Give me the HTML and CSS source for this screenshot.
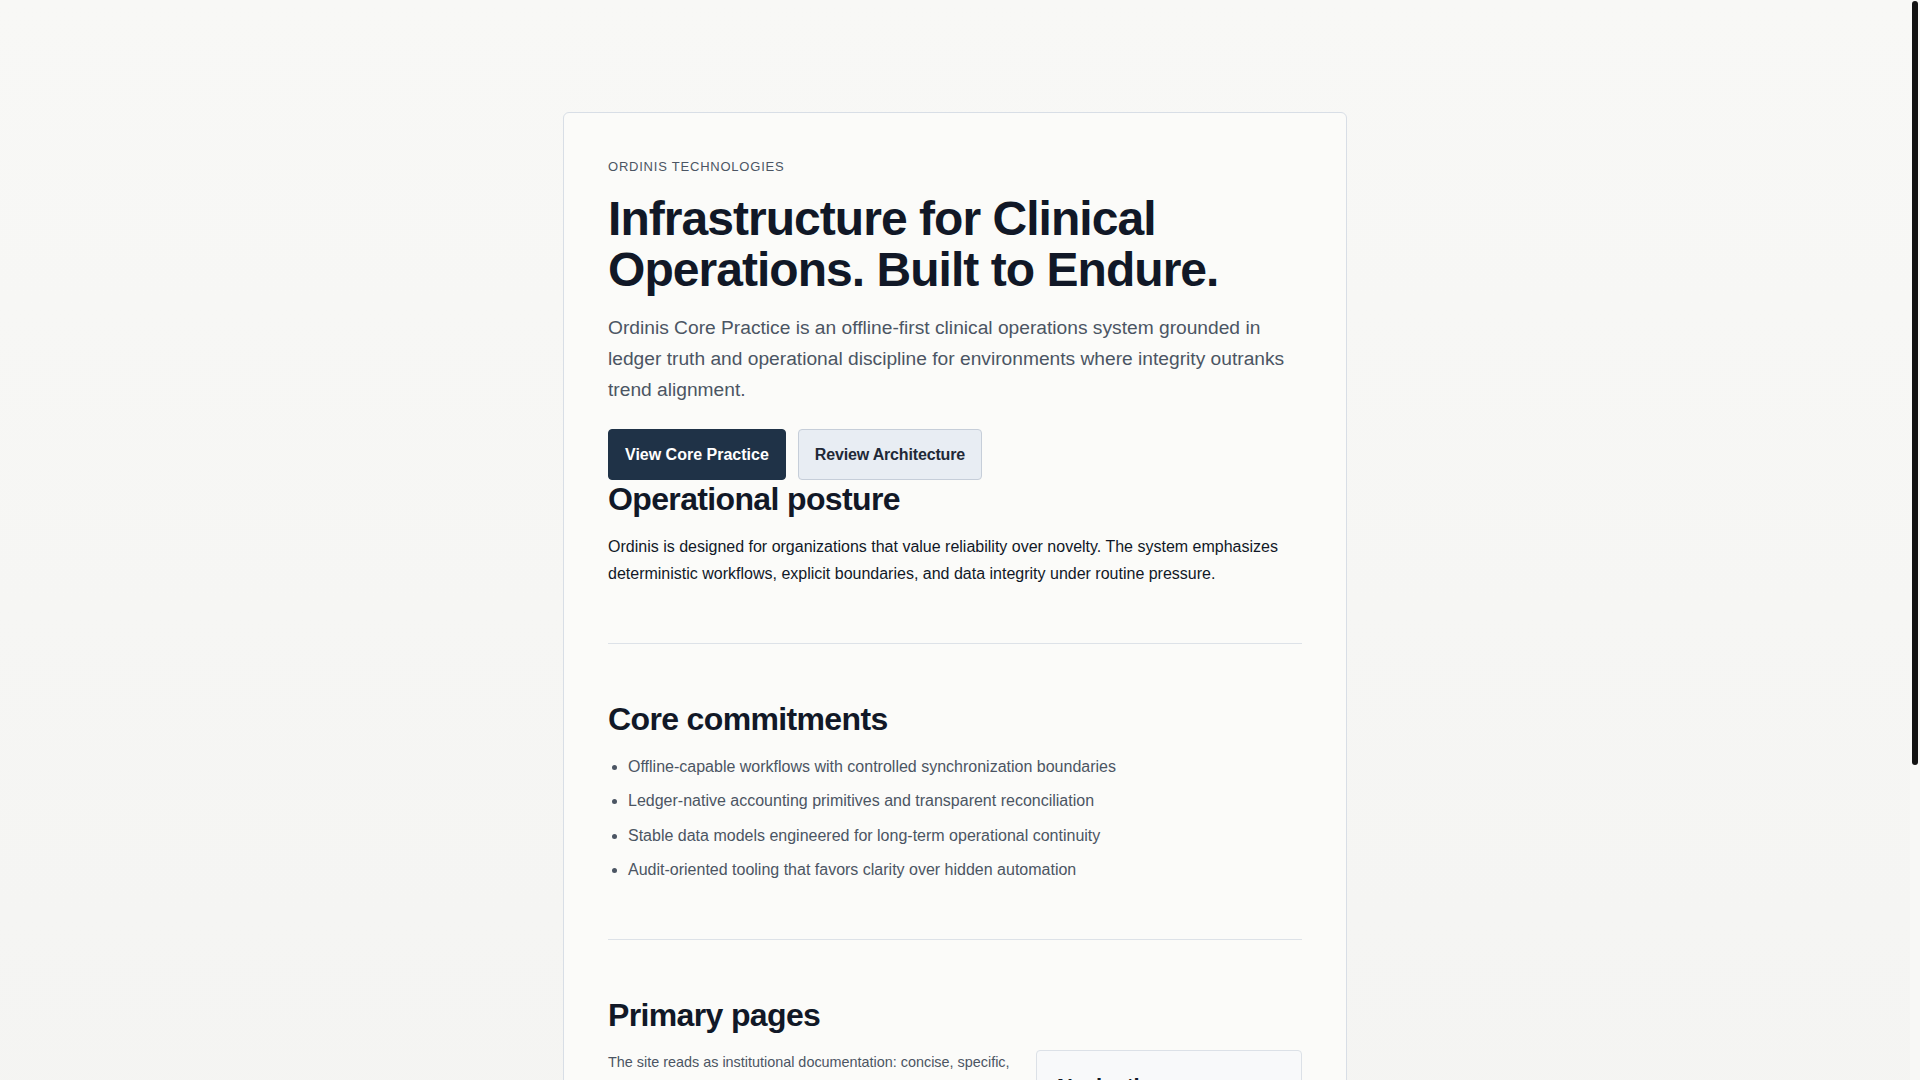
FILE: index.html
```html
<!DOCTYPE html>
<html lang="en">
<head>
<meta charset="utf-8">
<title>Ordinis Technologies</title>
<link rel="stylesheet" href="styles.css">
</head>
<body>
<div class="shell">
  <main class="card">
    <header class="hero">
      <p class="eyebrow">Ordinis Technologies</p>
      <h1 class="title">Infrastructure for Clinical Operations. Built to Endure.</h1>
      <p class="lede">Ordinis Core Practice is an offline-first clinical operations system grounded in ledger truth and operational discipline for environments where integrity outranks trend alignment.</p>
      <div class="actions">
        <a class="btn btn-primary" href="#core">View Core Practice</a>
        <a class="btn btn-secondary" href="#architecture">Review Architecture</a>
      </div>
    </header>

    <section class="section section-first">
      <h2 class="section-title">Operational posture</h2>
      <p class="body-text">Ordinis is designed for organizations that value reliability over novelty. The system emphasizes deterministic workflows, explicit boundaries, and data integrity under routine pressure.</p>
    </section>

    <section class="section">
      <h2 class="section-title">Core commitments</h2>
      <ul class="commitments">
        <li>Offline-capable workflows with controlled synchronization boundaries</li>
        <li>Ledger-native accounting primitives and transparent reconciliation</li>
        <li>Stable data models engineered for long-term operational continuity</li>
        <li>Audit-oriented tooling that favors clarity over hidden automation</li>
      </ul>
    </section>

    <section class="section section-last">
      <h2 class="section-title">Primary pages</h2>
      <div class="pages-grid">
        <div class="pages-text">
          <p>The site reads as institutional documentation: concise, specific, and deliberately unadorned. Each page states what the system does, where its boundaries lie, and how it behaves under failure.</p>
          <p>Material is maintained alongside the product and revised when behaviour changes, not when fashion does.</p>
        </div>
        <aside class="nav-card">
          <h3 class="nav-title">Navigation</h3>
          <ul class="nav-list">
            <li><a href="#core">Core Practice</a></li>
            <li><a href="#architecture">Architecture</a></li>
            <li><a href="#ledger">Ledger Model</a></li>
            <li><a href="#offline">Offline Operations</a></li>
            <li><a href="#governance">Governance</a></li>
          </ul>
        </aside>
      </div>
    </section>

    <footer class="card-footer">
      <p>© Ordinis Technologies. Clinical operations infrastructure.</p>
    </footer>
  </main>
</div>
<div class="scroll-track" aria-hidden="true"><div class="scroll-thumb"></div></div>
</body>
</html>
```

FILE: styles.css
```css
html, body {
  margin: 0;
  padding: 0;
}

body {
  background: linear-gradient(#f8f8f6, #f3f3f1);
  font-family: "Liberation Sans", Arial, sans-serif;
  color: #111827;
  line-height: 1.7;
}

.shell {
  padding: 112px 10px 91px 0;
}

.card {
  box-sizing: border-box;
  width: 784px;
  margin: 0 auto;
  padding: 45px 44px 44px;
  background: #fbfbf9;
  border: 1px solid #d8dee6;
  border-radius: 6px;
}

.eyebrow {
  margin: 0 0 17px;
  font-size: 13px;
  line-height: 18px;
  letter-spacing: 0.06em;
  text-transform: uppercase;
  color: #4b5563;
}

.title {
  margin: 0 0 17px;
  font-size: 48px;
  line-height: 51px;
  font-weight: 700;
  letter-spacing: -0.02em;
  color: #111827;
}

.lede {
  margin: 0 0 24px;
  font-size: 19.2px;
  line-height: 31px;
  color: #4b5563;
}

.actions {
  display: flex;
  gap: 12px;
}

.btn {
  display: inline-block;
  padding: 15px 16px;
  font-size: 16px;
  line-height: 19px;
  font-weight: 700;
  text-decoration: none;
  border-radius: 4px;
  border: 1px solid transparent;
}

.btn-primary {
  background: #1f3247;
  border-color: #1f3247;
  color: #ffffff;
}

.btn-secondary {
  background: #e8edf3;
  border-color: #c6ced9;
  color: #1f2937;
  letter-spacing: -0.01em;
}

.section {
  padding: 56px 0;
  border-bottom: 1px solid #dde2e8;
}

.section-first {
  padding-top: 0;
}

.section-last {
  border-bottom: none;
  padding-bottom: 40px;
}

.section-title {
  margin: 0;
  font-size: 32px;
  line-height: 38px;
  font-weight: 700;
  letter-spacing: -0.02em;
  color: #111827;
}

.body-text {
  margin: 15px 0 0;
  font-size: 16px;
  line-height: 27px;
  color: #111827;
}

.commitments {
  margin: 15px 0 0;
  padding-left: 20px;
  font-size: 16px;
  line-height: 27.2px;
  color: #4b5563;
}

.commitments li {
  margin-bottom: 7.2px;
}

.commitments li:last-child {
  margin-bottom: 0;
}

.pages-grid {
  display: grid;
  grid-template-columns: 1fr 266px;
  gap: 24px;
  margin-top: 16px;
  align-items: start;
}

.pages-text p {
  margin: 0 0 14px;
  font-size: 14.4px;
  line-height: 24.5px;
  color: #4b5563;
}

.nav-card {
  padding: 21px 20px 18px;
  background: #f8f9fa;
  border: 1px solid #dce1e7;
  border-radius: 4px;
}

.nav-title {
  margin: 0 0 8px;
  font-size: 22px;
  line-height: 30px;
  font-weight: 700;
  letter-spacing: -0.02em;
  color: #111827;
}

.nav-list {
  margin: 0;
  padding: 0;
  list-style: none;
}

.nav-list li {
  padding: 6px 0;
  border-top: 1px solid #e5e8ec;
  font-size: 15px;
  line-height: 22px;
}

.nav-list a {
  color: #1f3247;
  text-decoration: none;
}

.card-footer {
  padding-top: 24px;
  border-top: 1px solid #dde2e8;
}

.card-footer p {
  margin: 0;
  font-size: 13px;
  line-height: 20px;
  color: #6b7280;
}

.scroll-track {
  position: fixed;
  top: 0;
  right: 0;
  width: 10px;
  height: 100vh;
  background: #f8f8f6;
}

.scroll-thumb {
  margin: 1px 0 0 2px;
  width: 6px;
  height: 764px;
  background: #121212;
  border-radius: 3px;
}
```
